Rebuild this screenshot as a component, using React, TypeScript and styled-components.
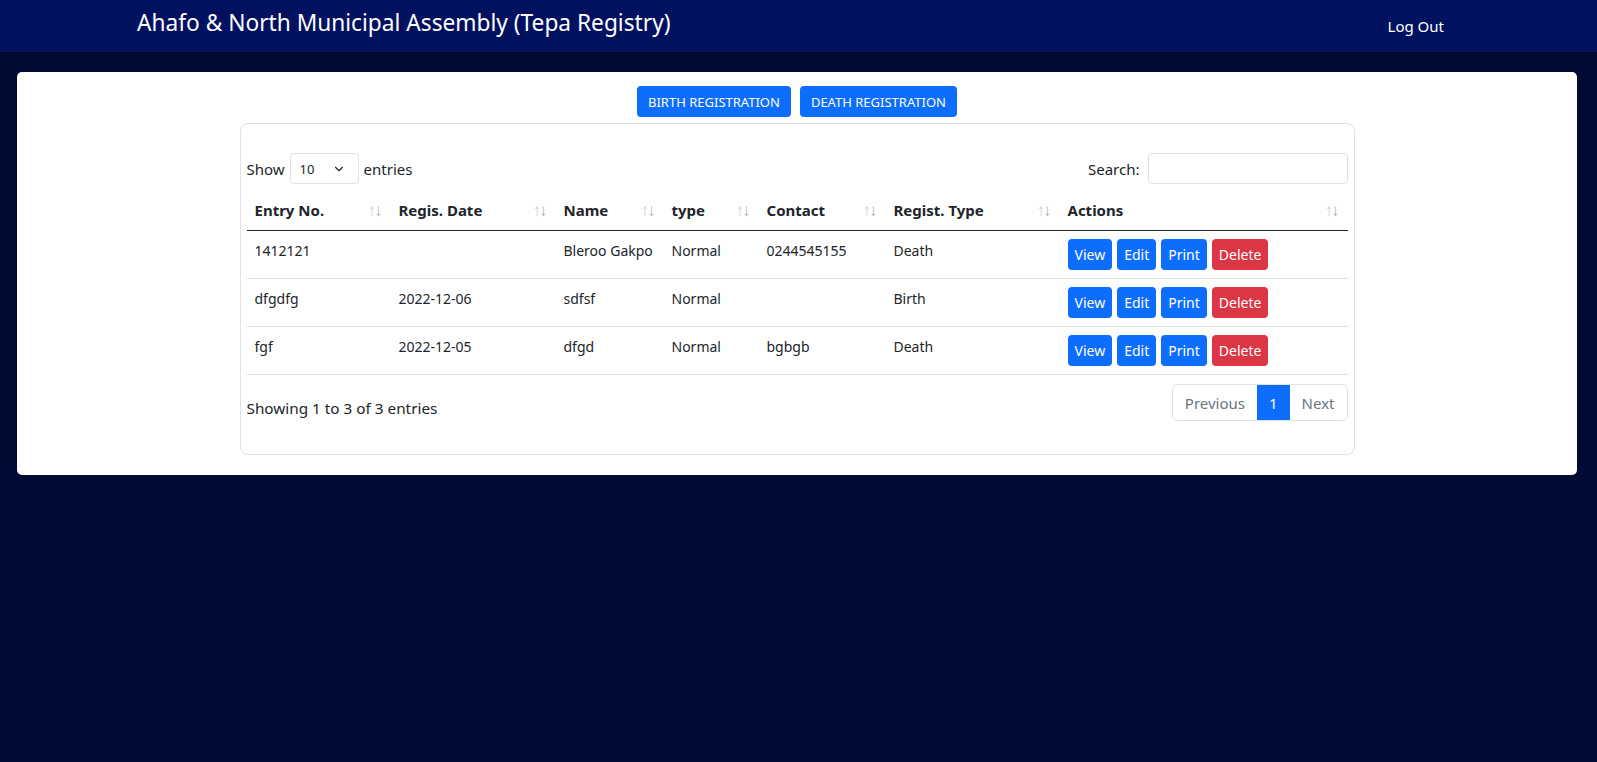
import React from 'react'
import styled, { createGlobalStyle, css } from 'styled-components'
import { ChevronDown } from 'lucide-react'

const GlobalStyle = createGlobalStyle`
  body {
    margin: 0;
    background: #000a33;
    font-family: 'Noto Sans', 'Open Sans', sans-serif;
    color: #212529;
  }
  * {
    box-sizing: border-box;
  }
`

const Header = styled.header`
  height: 52px;
  background: #001160;
  border-bottom: 1px solid #0a1650;
  display: flex;
  justify-content: space-between;
  align-items: flex-start;
  padding: 0 153px 0 137px;
`

const Brand = styled.div`
  color: #fff;
  font-size: 22.7px;
  line-height: 29px;
  margin-top: 8px;
`

const LogOut = styled.a`
  color: #fff;
  font-size: 15px;
  line-height: 24px;
  margin-top: 14px;
`

const Card = styled.main`
  margin: 20px 20px 0 17px;
  background: #fff;
  border-radius: 5px;
  padding: 14px 0 20px;
  display: flex;
  flex-direction: column;
  align-items: center;
`

const TopButtons = styled.div`
  display: flex;
  gap: 9px;
  margin-bottom: 6px;
`

const Button = styled.button<{ $variant?: 'primary' | 'danger'; $size?: 'sm' | 'md' }>(
  ({ $variant = 'primary', $size = 'sm' }) => css`
    border: none;
    border-radius: 4px;
    color: #fff;
    background: ${$variant === 'danger' ? '#dc3545' : '#0d6efd'};
    font-family: inherit;
    cursor: pointer;
    ${$size === 'md'
      ? css`
          height: 31px;
          padding: 0 11px;
          font-size: 13px;
        `
      : css`
          height: 31px;
          padding: 0 7px;
          font-size: 14px;
        `}
  `
)

const Panel = styled.section`
  width: 1115px;
  border: 1px solid #dee2e6;
  border-radius: 8px;
  padding: 29px 6px 33px;
`

const Toolbar = styled.div`
  display: flex;
  justify-content: space-between;
  align-items: center;
  font-size: 15px;
`

const Label = styled.label`
  display: flex;
  align-items: center;
  gap: 5px;
`

const SelectBox = styled.div`
  width: 69px;
  height: 31px;
  border: 1px solid #dee2e6;
  border-radius: 4px;
  display: flex;
  align-items: center;
  justify-content: space-between;
  padding: 0 12px 0 9px;
  font-size: 13px;
  color: #212529;
`

const SearchInput = styled.input`
  width: 200px;
  height: 31px;
  border: 1px solid #dee2e6;
  border-radius: 4px;
  margin-left: 3px;
`

const Table = styled.table`
  width: 100%;
  border-collapse: collapse;
  table-layout: fixed;
  margin-top: 6px;
`

const Th = styled.th<{ $width?: number }>`
  width: ${({ $width }) => ($width ? `${$width}px` : 'auto')};
  padding: 8px 8px;
  text-align: left;
  font-size: 15px;
  font-weight: 700;
  line-height: 24px;
  border-bottom: 1px solid #212529;
`

const ThInner = styled.div`
  display: flex;
  justify-content: space-between;
  align-items: center;
`

const SortIcon = styled.span`
  font-size: 17px;
  font-weight: 400;
  color: #cfd3d7;
  letter-spacing: -2px;
  padding-right: 2px;
  & > span:last-child {
    color: #aeb4ba;
  }
`

const Td = styled.td`
  padding: 8px 8px;
  font-size: 14px;
  line-height: 24px;
  vertical-align: top;
  border-bottom: 1px solid #dee2e6;
`

const Actions = styled.div`
  display: flex;
  gap: 5px;
`

const Footer = styled.div`
  display: flex;
  justify-content: space-between;
  align-items: flex-start;
  margin-top: 9px;
`

const Info = styled.div`
  font-size: 15.3px;
  line-height: 24px;
  padding-top: 12px;
`

const Pagination = styled.div`
  display: flex;
  border: 1px solid #dee2e6;
  border-radius: 6px;
  overflow: hidden;
  height: 37px;
`

const PageItem = styled.span<{ $active?: boolean }>`
  display: flex;
  align-items: center;
  padding: 0 12px;
  font-size: 15px;
  color: ${({ $active }) => ($active ? '#fff' : '#6c757d')};
  background: ${({ $active }) => ($active ? '#0d6efd' : '#fff')};
`

const columns = [
  { title: 'Entry No.', width: 144 },
  { title: 'Regis. Date', width: 165 },
  { title: 'Name', width: 108 },
  { title: 'type', width: 95 },
  { title: 'Contact', width: 127 },
  { title: 'Regist. Type', width: 174 },
  { title: 'Actions' },
]

const rows = [
  { entry: '1412121', date: '', name: 'Bleroo Gakpo', type: 'Normal', contact: '0244545155', reg: 'Death' },
  { entry: 'dfgdfg', date: '2022-12-06', name: 'sdfsf', type: 'Normal', contact: '', reg: 'Birth' },
  { entry: 'fgf', date: '2022-12-05', name: 'dfgd', type: 'Normal', contact: 'bgbgb', reg: 'Death' },
]

export default function App() {
  return (
    <>
      <GlobalStyle />
      <Header>
        <Brand>Ahafo &amp; North Municipal Assembly (Tepa Registry)</Brand>
        <LogOut>Log Out</LogOut>
      </Header>
      <Card>
        <TopButtons>
          <Button $size="md">BIRTH REGISTRATION</Button>
          <Button $size="md">DEATH REGISTRATION</Button>
        </TopButtons>
        <Panel>
          <Toolbar>
            <Label>
              Show
              <SelectBox>
                10
                <ChevronDown size={14} strokeWidth={2} />
              </SelectBox>
              entries
            </Label>
            <Label>
              Search:
              <SearchInput type="search" />
            </Label>
          </Toolbar>
          <Table>
            <thead>
              <tr>
                {columns.map((c) => (
                  <Th key={c.title} $width={c.width}>
                    <ThInner>
                      {c.title}
                      <SortIcon>
                        <span>↑</span>
                        <span>↓</span>
                      </SortIcon>
                    </ThInner>
                  </Th>
                ))}
              </tr>
            </thead>
            <tbody>
              {rows.map((r) => (
                <tr key={r.entry}>
                  <Td>{r.entry}</Td>
                  <Td>{r.date}</Td>
                  <Td>{r.name}</Td>
                  <Td>{r.type}</Td>
                  <Td>{r.contact}</Td>
                  <Td>{r.reg}</Td>
                  <Td>
                    <Actions>
                      <Button>View</Button>
                      <Button>Edit</Button>
                      <Button>Print</Button>
                      <Button $variant="danger">Delete</Button>
                    </Actions>
                  </Td>
                </tr>
              ))}
            </tbody>
          </Table>
          <Footer>
            <Info>Showing 1 to 3 of 3 entries</Info>
            <Pagination>
              <PageItem>Previous</PageItem>
              <PageItem $active>1</PageItem>
              <PageItem>Next</PageItem>
            </Pagination>
          </Footer>
        </Panel>
      </Card>
    </>
  )
}
